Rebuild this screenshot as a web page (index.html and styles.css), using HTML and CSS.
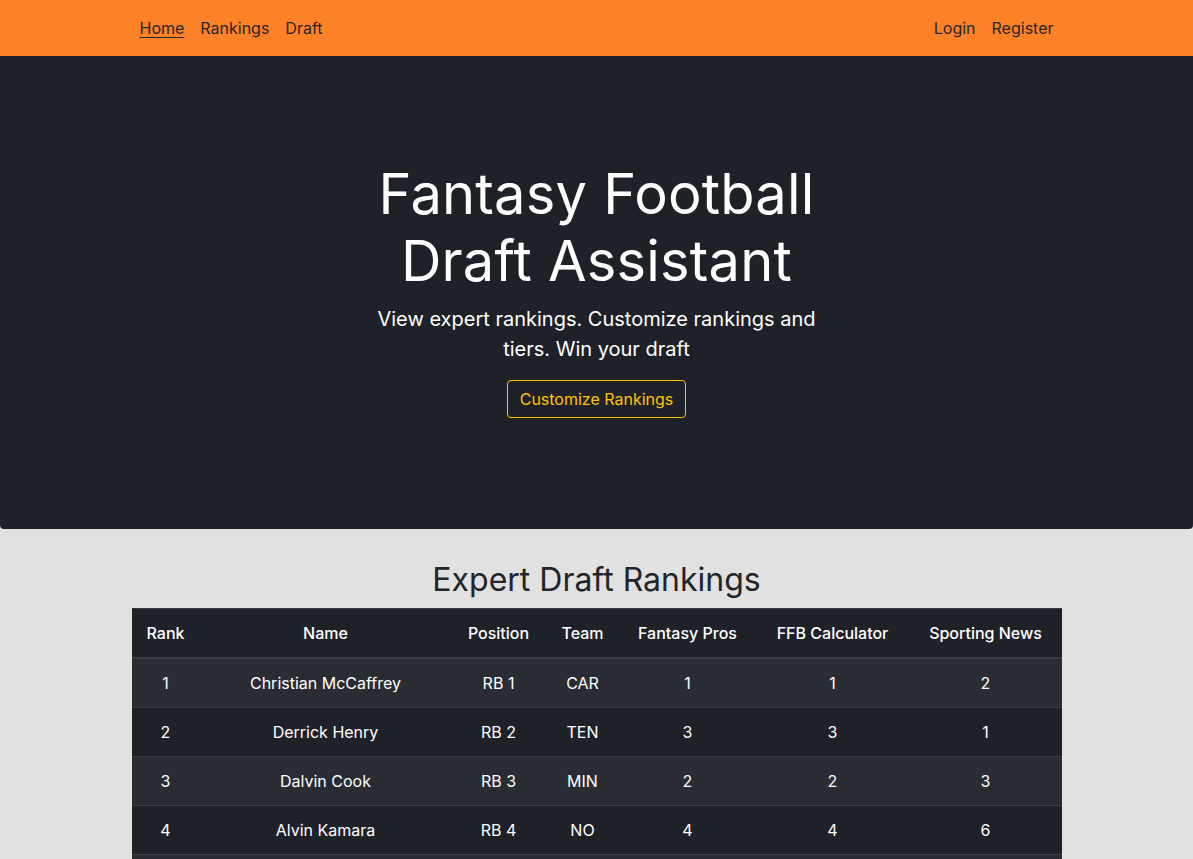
FILE: index.html
```html
<!DOCTYPE html>
<html lang="en">
<head>
<meta charset="utf-8">
<title>Fantasy Football Draft Assistant</title>
<link rel="stylesheet" href="styles.css">
</head>
<body>
<nav class="navbar">
  <div class="container nav-inner">
    <ul class="nav-list">
      <li><a class="nav-link active" href="#">Home</a></li>
      <li><a class="nav-link" href="#">Rankings</a></li>
      <li><a class="nav-link" href="#">Draft</a></li>
    </ul>
    <ul class="nav-list">
      <li><a class="nav-link" href="#">Login</a></li>
      <li><a class="nav-link" href="#">Register</a></li>
    </ul>
  </div>
</nav>
<header class="hero">
  <div class="hero-col">
    <h1 class="hero-title">Fantasy Football Draft Assistant</h1>
    <p class="lead">View expert rankings. Customize rankings and tiers. Win your draft</p>
    <a class="btn-outline" href="#">Customize Rankings</a>
  </div>
</header>
<main class="container">
  <h2 class="section-title">Expert Draft Rankings</h2>
  <table class="rankings">
    <thead>
      <tr>
        <th class="c-rank">Rank</th>
        <th class="c-name">Name</th>
        <th class="c-pos">Position</th>
        <th class="c-team">Team</th>
        <th class="c-fp">Fantasy Pros</th>
        <th class="c-ffb">FFB Calculator</th>
        <th class="c-sn">Sporting News</th>
      </tr>
    </thead>
    <tbody>
      <tr><td>1</td><td>Christian McCaffrey</td><td>RB 1</td><td>CAR</td><td>1</td><td>1</td><td>2</td></tr>
      <tr><td>2</td><td>Derrick Henry</td><td>RB 2</td><td>TEN</td><td>3</td><td>3</td><td>1</td></tr>
      <tr><td>3</td><td>Dalvin Cook</td><td>RB 3</td><td>MIN</td><td>2</td><td>2</td><td>3</td></tr>
      <tr><td>4</td><td>Alvin Kamara</td><td>RB 4</td><td>NO</td><td>4</td><td>4</td><td>6</td></tr>
      <tr><td>5</td><td>Saquon Barkley</td><td>RB 5</td><td>NYG</td><td>5</td><td>5</td><td>4</td></tr>
      <tr><td>6</td><td>Davante Adams</td><td>WR 1</td><td>GB</td><td>6</td><td>7</td><td>5</td></tr>
    </tbody>
  </table>
</main>
</body>
</html>
```
FILE: styles.css
```css
* { box-sizing: border-box; }

body {
  margin: 0;
  background: #e0e1e0;
  font-family: Inter, "Noto Sans", "Liberation Sans", sans-serif;
  font-size: 16px;
  line-height: 1.5;
  color: #212529;
}

.container {
  width: 960px;
  margin: 0 auto;
  padding: 0 15px;
}

.navbar {
  background: #fd8126;
  padding: 8px 0;
}

.nav-inner {
  display: flex;
  justify-content: space-between;
  align-items: center;
}

.nav-list {
  list-style: none;
  margin: 0;
  padding: 0;
  display: flex;
}

.nav-link {
  display: block;
  padding: 8px;
  color: #25272c;
  text-decoration: none;
  line-height: 24px;
}

.nav-link.active {
  text-decoration: underline;
  text-underline-offset: 3px;
}

.hero {
  background: #1f2129;
  border-radius: 0 0 4px 4px;
  padding: 105px 0 111px;
  margin-bottom: 32px;
  text-align: center;
  color: #fff;
}

.hero-col {
  width: 450px;
  margin: 0 auto;
}

.hero-title {
  font-size: 56px;
  font-weight: 400;
  line-height: 1.2;
  margin: 0 0 9px;
  letter-spacing: 0.2px;
}

.lead {
  font-size: 20px;
  line-height: 30px;
  font-weight: 400;
  margin: 0 0 16px;
}

.btn-outline {
  display: inline-block;
  color: #ffc107;
  border: 1px solid #ffc107;
  border-radius: 4px;
  padding: 6px 12px;
  line-height: 24px;
  text-decoration: none;
  font-size: 16px;
}

.section-title {
  font-size: 32px;
  font-weight: 400;
  line-height: 1.2;
  margin: 0 0 8px;
  text-align: center;
  color: #212529;
}

.rankings {
  width: 100%;
  border-collapse: collapse;
  background: #1f2129;
  color: #fff;
  text-align: center;
}

.rankings th,
.rankings td {
  padding: 12px;
  line-height: 24px;
  border-top: 1px solid #3a3d44;
  white-space: nowrap;
}

.rankings th {
  font-weight: 500;
  border-bottom: 2px solid #3a3d44;
}

.rankings tbody tr:nth-child(odd) { background: #2a2c33; }

.c-rank { width: 68px; }
.c-name { width: 252px; }
.c-pos { width: 94px; }
.c-team { width: 74px; }
.c-fp { width: 136px; }
.c-ffb { width: 154px; }
.c-sn { width: 152px; }
```
